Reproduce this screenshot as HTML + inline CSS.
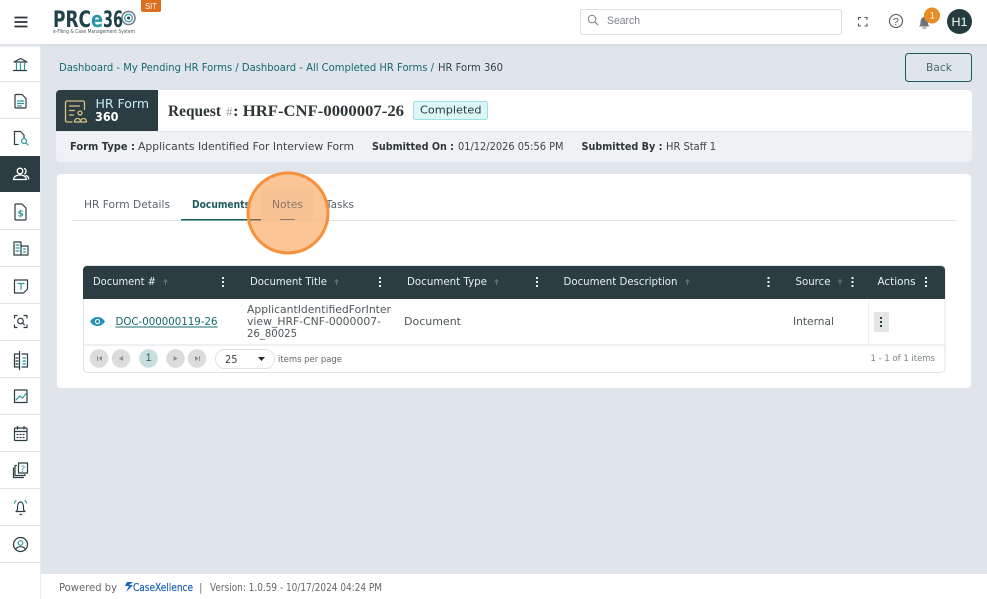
<!DOCTYPE html>
<html lang="en">
<head>
<meta charset="utf-8">
<title>HR Form 360</title>
<style>
html,body{margin:0;padding:0;width:987px;height:599px;overflow:hidden;background:#e0e5eb}
svg{position:absolute;left:0;top:0;display:block}
text{font-family:"DejaVu Sans",sans-serif;white-space:pre}
.ic{fill:none;stroke:#2b3d42;stroke-width:1.2;stroke-linecap:round;stroke-linejoin:round}
.ls{font-family:"Liberation Sans",sans-serif}
.sf{font-family:"Liberation Serif",serif}
</style>
</head>
<body>
<svg width="987" height="599" viewBox="0 0 987 599" xmlns="http://www.w3.org/2000/svg">
<defs>
<linearGradient id="hs" x1="0" y1="0" x2="0" y2="1"><stop offset="0" stop-color="#cfd4da"/><stop offset="1" stop-color="#e0e5eb"/></linearGradient>
</defs>
<rect width="987" height="599" fill="#e0e5eb"/>
<!-- footer -->
<rect x="41" y="574" width="946" height="25" fill="#fff"/>
<text x="59" y="591" font-size="10.500" fill="#666" textLength="58" lengthAdjust="spacingAndGlyphs">Powered by</text>
<path d="M133 582h-6l-2 4h4l-3 6 7-7h-4z" fill="#1565c0"/>
<text x="133" y="591" font-size="10.500" fill="#1b62b5" stroke="#1b62b5" stroke-width=".2" textLength="60" lengthAdjust="spacingAndGlyphs">CaseXellence</text>
<text x="199" y="591" font-size="10.500" fill="#777">|</text>
<text x="210" y="591" font-size="10.500" fill="#666" textLength="172" lengthAdjust="spacingAndGlyphs">Version: 1.0.59 - 10/17/2024 04:24 PM</text>

<!-- sidebar -->
<rect x="0" y="44" width="40" height="555" fill="#fff"/>
<rect x="40" y="44" width="1" height="555" fill="#e8ebef"/>
<g fill="#dcdfe3">
<rect y="81" width="40" height="1"/><rect y="118" width="40" height="1"/><rect y="229" width="40" height="1"/><rect y="266" width="40" height="1"/><rect y="303" width="40" height="1"/><rect y="340" width="40" height="1"/><rect y="377" width="40" height="1"/><rect y="414" width="40" height="1"/><rect y="451" width="40" height="1"/><rect y="488" width="40" height="1"/><rect y="525" width="40" height="1"/><rect y="562" width="40" height="1"/>
</g>
<rect y="156" width="40" height="36" fill="#2b3d42"/>

<!-- sidebar icons -->
<g class="ic">
<path d="M14 62l6.500-3.500L27 62zM13.500 70.500h13"/>
<path d="M16.500 63.500v6M20.500 63.500v6M24.500 63.500v6" stroke="#2c9a9a"/>
<path d="M16 94.500h6l4 4v8.500a1 1 0 0 1-1 1H16a1 1 0 0 1-1-1v-11.500a1 1 0 0 1 1-1z"/>
<path d="M17.500 101h6M17.500 103.500h6M17.500 106h4" stroke="#2c9a9a"/>
<path d="M18 144.500h-3.500v-13h6l3.500 3.500v3"/>
<circle cx="24" cy="141" r="2.500" stroke="#2c9a9a"/><path d="M26 143l2 2" stroke="#2c9a9a"/>
</g>
<g fill="none" stroke="#fff" stroke-width="1.300" stroke-linecap="round">
<circle cx="20" cy="171" r="2.800"/>
<path d="M13.500 179.500c.5-3 3-4.500 6.500-4.500s6 1.500 6.500 4.500z"/>
<path d="M24.500 168.500c2 .8 2 4.500 0 5.300M26 175.500c1.500.5 2.500 2 2.800 3.500"/>
</g>
<g class="ic">
<path d="M16 204h6l4 4v11a1 1 0 0 1-1 1H16a1 1 0 0 1-1-1v-14a1 1 0 0 1 1-1z"/>
<text x="17.500" y="216.500" font-size="9" font-weight="bold" fill="#2c9a9a" stroke="none">$</text>
<path d="M14 255v-13h7v13zM21 246h7v9h-7z"/>
<path d="M16 245h3M16 248h3M16 251h3M23.500 249h2M23.500 252h2" stroke="#2c9a9a"/>
<path d="M14.500 280h13v9l-4 4h-9z"/>
<path d="M18 283.500h6M21 283.500v6" stroke="#2c9a9a"/>
<path d="M14.500 318v-2.500h2.500M24 315.500h3v2.500M14.500 325v2.500h2.500M24 327.500h3V325"/>
<circle cx="20.500" cy="321" r="2.800"/><path d="M22.500 323l2 2"/>
<path d="M19.500 354h-5v13h5M19.500 351.500v18M22 354h5.500v13H22"/>
<path d="M16 358h2M16 361h2M16 364h2"/>
<path d="M23 358h2.500M23 361h2.500M23 364h2.500" stroke="#2c9a9a"/>
<rect x="14.500" y="390" width="12.500" height="12.500"/>
<path d="M16 400l3.500-4 3 2 4-5" stroke="#2c9a9a"/>
<rect x="14.500" y="428" width="12.500" height="12.500" rx="1"/>
<path d="M14.500 431.500h12.500M17.500 426.500v2.500M24 426.500v2.500"/>
<path d="M17 434.500h1M20 434.500h1M23 434.500h1M17 437.500h1M20 437.500h1M23 437.500h1"/>
<rect x="18.500" y="463" width="9" height="10"/>
<path d="M16.500 465.500h-1.500v10h10v-1"/><path d="M13.500 468v9.500h10"/>
<text x="20.500" y="472" font-size="9" fill="#2c9a9a" stroke="none">?</text>
<path d="M16 511.500c1.500-1 1.500-2 1.500-4 0-3 1-5.500 3-5.500s3 2.500 3 5.500c0 2 0 3 1.500 4z"/>
<path d="M20 514.500h1.500"/>
<path d="M14.500 503c.3-1 .8-1.800 1.500-2.500M26.500 503c-.3-1-.8-1.800-1.500-2.500" stroke="#2c9a9a"/>
<circle cx="20.500" cy="544.500" r="7"/>
<circle cx="20.500" cy="543" r="2.300" stroke="#2c9a9a"/>
<path d="M15.500 549.500c1-2 3-2.800 5-2.800s4 .8 5 2.800"/>
</g>

<!-- header -->
<rect y="44" width="987" height="3" fill="url(#hs)" opacity=".7"/>
<rect width="987" height="44" fill="#fff"/>
<path d="M14.500 17.500h13M14.500 22h13M14.500 26.500h13" stroke="#2a3338" stroke-width="1.800" fill="none"/>
<text x="53" y="27" font-size="22.500" font-weight="bold" fill="#21414a" textLength="38" lengthAdjust="spacingAndGlyphs">PRC</text>
<text x="91" y="27" font-size="22.500" font-weight="bold" fill="#2b96a8" textLength="12" lengthAdjust="spacingAndGlyphs">e</text>
<text x="103" y="27" font-size="22.500" font-weight="bold" fill="#21414a" textLength="20" lengthAdjust="spacingAndGlyphs">36</text>
<g fill="none">
<circle cx="128.500" cy="18" r="6.500" stroke="#6a7a80" stroke-width="1.500"/>
<circle cx="128.500" cy="18" r="3.800" stroke="#2b96a8" stroke-width="1.200"/>
<circle cx="128.500" cy="18" r="1.500" fill="#21414a"/>
</g>
<text x="53" y="33" font-size="5" fill="#4a5a60" textLength="82" lengthAdjust="spacingAndGlyphs">e-Filing &amp; Case Management System</text>
<path d="M141 0h20v10a2 2 0 0 1-2 2h-16a2 2 0 0 1-2-2z" fill="#dd701e"/>
<text class="ls" x="145" y="9" font-size="8" fill="#fff" textLength="12" lengthAdjust="spacingAndGlyphs">SIT</text>

<rect x="580.500" y="9.500" width="261" height="25" rx="2" fill="#fff" stroke="#dcdfe2"/>
<circle cx="592" cy="19" r="3.800" fill="none" stroke="#7b7f83" stroke-width="1"/>
<path d="M595 22l3 3" stroke="#7b7f83" stroke-width="1.200"/>
<text class="ls" x="607" y="24" font-size="11" fill="#7d8286" textLength="33" lengthAdjust="spacingAndGlyphs">Search</text>
<path d="M858.500 20v-2.500h2.500M864.500 17.500h2.500V20M858.500 23.500V26H861M864.500 26H867v-2.500" fill="none" stroke="#4c5458" stroke-width="1.100"/>
<circle cx="896" cy="21" r="6.500" fill="none" stroke="#4c5458" stroke-width="1.100"/>
<text class="ls" x="893" y="25" font-size="10.500" fill="#4c5458">?</text>
<path d="M919 26.500c1-1 1.500-2 1.500-4 0-3 1.500-5.500 3.500-5.500s4 2.500 4 5.500c0 2 .5 3 1.500 4z" fill="#6d7478"/>
<rect x="922.500" y="27.500" width="4" height="1" fill="#6d7478"/>
<circle cx="932" cy="15.500" r="8" fill="#e88c24"/>
<text class="ls" x="929.800" y="18.500" font-size="9" fill="#fff">1</text>
<circle cx="959.500" cy="21.500" r="12.500" fill="#243c40"/>
<text class="ls" x="951.500" y="26" font-size="12" fill="#fff" textLength="16" lengthAdjust="spacingAndGlyphs">H1</text>

<!-- breadcrumb -->
<text x="59" y="71" font-size="10.500" fill="#14696d" textLength="375" lengthAdjust="spacingAndGlyphs">Dashboard - My Pending HR Forms / Dashboard - All Completed HR Forms /</text>
<text x="438" y="71" font-size="10.500" fill="#30434a" textLength="65" lengthAdjust="spacingAndGlyphs">HR Form 360</text>
<rect x="905.500" y="53.500" width="66" height="28" rx="3" fill="none" stroke="#1d5a5e"/>
<text x="926" y="71" font-size="11" fill="#47696d" textLength="26" lengthAdjust="spacingAndGlyphs">Back</text>

<!-- request card -->
<path d="M60 90h908a4 4 0 0 1 4 4v37H56V94a4 4 0 0 1 4-4z" fill="#fff"/>
<path d="M56 131h916v27a4 4 0 0 1-4 4H60a4 4 0 0 1-4-4z" fill="#eff2f4"/>
<rect x="56" y="131" width="916" height="1" fill="#e4e8eb"/>
<path d="M60 90h98v41H56V94a4 4 0 0 1 4-4z" fill="#2b3d42"/>
<g fill="none" stroke="#dcc184" stroke-width="1.300" stroke-linecap="round" stroke-linejoin="round">
<path d="M72 122h-5a1.500 1.500 0 0 1-1.500-1.500v-18a1.500 1.500 0 0 1 1.500-1.500h16a1.500 1.500 0 0 1 1.500 1.500v7"/>
<path d="M69.500 106h10M69.500 110.500h5M69.500 115h4"/>
<circle cx="80" cy="113" r="2"/>
<path d="M74.500 122c0-2.500 1.500-3.500 3-3.500s3 1 3 3.500zM80.500 122c0-2.500 1.500-3.500 3-3.500s3 1 3 3.500z"/>
</g>
<text x="95.500" y="108" font-size="12" fill="#c9eef2" textLength="53.500" lengthAdjust="spacingAndGlyphs">HR Form</text>
<text x="95" y="121" font-size="12" font-weight="bold" fill="#fff" textLength="23.500" lengthAdjust="spacingAndGlyphs">360</text>
<text class="sf" x="168" y="116" font-size="16" font-weight="bold" fill="#2e3537" textLength="53" lengthAdjust="spacingAndGlyphs">Request</text>
<text class="sf" x="226" y="116" font-size="13" fill="#9aa1a4">#</text>
<text class="sf" x="233" y="116" font-size="16" font-weight="bold" fill="#2e3537" textLength="171" lengthAdjust="spacingAndGlyphs">: HRF-CNF-0000007-26</text>
<rect x="413.500" y="101.500" width="74" height="18" rx="2" fill="#dcf6f8" stroke="#9adfe1"/>
<text x="420" y="113.500" font-size="11" fill="#2a3a3e" textLength="61.500" lengthAdjust="spacingAndGlyphs">Completed</text>

<text x="70" y="150" font-size="10.500" font-weight="bold" fill="#2f3639" textLength="65" lengthAdjust="spacingAndGlyphs">Form Type :</text>
<text x="138" y="150" font-size="10.500" fill="#3d4548" textLength="216" lengthAdjust="spacingAndGlyphs">Applicants Identified For Interview Form</text>
<text x="372" y="150" font-size="10.500" font-weight="bold" fill="#2f3639" textLength="82" lengthAdjust="spacingAndGlyphs">Submitted On :</text>
<text x="458" y="150" font-size="10.500" fill="#3d4548" textLength="105.500" lengthAdjust="spacingAndGlyphs">01/12/2026 05:56 PM</text>
<text x="581.500" y="150" font-size="10.500" font-weight="bold" fill="#2f3639" textLength="81" lengthAdjust="spacingAndGlyphs">Submitted By :</text>
<text x="666" y="150" font-size="10.500" fill="#3d4548" textLength="50" lengthAdjust="spacingAndGlyphs">HR Staff 1</text>

<!-- main card -->
<rect x="57" y="174" width="914" height="214" rx="4" fill="#fff"/>
<text x="84" y="208" font-size="10.500" fill="#59666b" textLength="86" lengthAdjust="spacingAndGlyphs">HR Form Details</text>
<text x="192" y="208" font-size="10.500" font-weight="bold" fill="#1d5a5e" textLength="58" lengthAdjust="spacingAndGlyphs">Documents</text>
<text x="326" y="208" font-size="10.500" fill="#59666b" textLength="28" lengthAdjust="spacingAndGlyphs">Tasks</text>
<rect x="72" y="220" width="885" height="1" fill="#dfe3e5"/>
<rect x="181" y="219" width="80" height="1.500" fill="#145e5e"/>

<!-- grid -->
<rect x="83.500" y="265.500" width="861.500" height="107" rx="4" fill="#fff" stroke="#dfe2e4"/>
<path d="M87 266h854a4 4 0 0 1 4 4v29H83v-29a4 4 0 0 1 4-4z" fill="#2b3d42"/>
<text x="93" y="285" font-size="10.500" fill="#e9eff0" textLength="63" lengthAdjust="spacingAndGlyphs">Document #</text>
<text x="250" y="285" font-size="10.500" fill="#e9eff0" textLength="77" lengthAdjust="spacingAndGlyphs">Document Title</text>
<text x="407" y="285" font-size="10.500" fill="#e9eff0" textLength="80" lengthAdjust="spacingAndGlyphs">Document Type</text>
<text x="563.500" y="285" font-size="10.500" fill="#e9eff0" textLength="114" lengthAdjust="spacingAndGlyphs">Document Description</text>
<text x="795.500" y="285" font-size="10.500" fill="#e9eff0" textLength="35" lengthAdjust="spacingAndGlyphs">Source</text>
<text x="877.500" y="285" font-size="10.500" fill="#e9eff0" textLength="38" lengthAdjust="spacingAndGlyphs">Actions</text>
<g stroke="#63767b" stroke-width="1" fill="none">
<path d="M165.500 285v-5M163.500 282l2-2.500 2 2.500M336.500 285v-5M334.500 282l2-2.500 2 2.500M496.500 285v-5M494.500 282l2-2.500 2 2.500M687.500 285v-5M685.500 282l2-2.500 2 2.500M840 285v-5M838 282l2-2.500 2 2.500"/>
</g>
<g fill="#e9eff0">
<rect x="222" y="277" width="2" height="2"/><rect x="222" y="281" width="2" height="2"/><rect x="222" y="285" width="2" height="2"/>
<rect x="379" y="277" width="2" height="2"/><rect x="379" y="281" width="2" height="2"/><rect x="379" y="285" width="2" height="2"/>
<rect x="536" y="277" width="2" height="2"/><rect x="536" y="281" width="2" height="2"/><rect x="536" y="285" width="2" height="2"/>
<rect x="767.500" y="277" width="2" height="2"/><rect x="767.500" y="281" width="2" height="2"/><rect x="767.500" y="285" width="2" height="2"/>
<rect x="851.500" y="277" width="2" height="2"/><rect x="851.500" y="281" width="2" height="2"/><rect x="851.500" y="285" width="2" height="2"/>
<rect x="925" y="277" width="2" height="2"/><rect x="925" y="281" width="2" height="2"/><rect x="925" y="285" width="2" height="2"/>
</g>
<!-- row -->
<path d="M90 321.500c2-3 4.500-4.500 7.500-4.500s5.500 1.500 7.500 4.500c-2 3-4.500 4.500-7.500 4.500s-5.500-1.500-7.500-4.500z" fill="#1f93bd"/>
<circle cx="97.500" cy="321.500" r="2.600" fill="#fff"/><circle cx="97.500" cy="321.500" r="1.400" fill="#1f6e8c"/>
<text x="115.500" y="325" font-size="10.500" fill="#14696d" textLength="102" lengthAdjust="spacingAndGlyphs">DOC-000000119-26</text>
<rect x="115.500" y="326.500" width="102" height="1" fill="#14696d"/>
<text x="247" y="313" font-size="10.500" fill="#4d575b" textLength="144" lengthAdjust="spacingAndGlyphs">ApplicantIdentifiedForInter</text>
<text x="247" y="325" font-size="10.500" fill="#4d575b" textLength="134" lengthAdjust="spacingAndGlyphs">view_HRF-CNF-0000007-</text>
<text x="247" y="337" font-size="10.500" fill="#4d575b" textLength="50" lengthAdjust="spacingAndGlyphs">26_80025</text>
<text x="404" y="325" font-size="10.500" fill="#4d575b" textLength="57" lengthAdjust="spacingAndGlyphs">Document</text>
<text x="793" y="325" font-size="10.500" fill="#4d575b" textLength="41" lengthAdjust="spacingAndGlyphs">Internal</text>
<rect x="868" y="300" width="1" height="44" fill="#eceeef"/>
<rect x="874" y="312" width="15" height="20" rx="2" fill="#e3e5e6"/>
<g fill="#2b3d42"><rect x="880" y="317" width="2" height="2"/><rect x="880" y="321" width="2" height="2"/><rect x="880" y="325" width="2" height="2"/></g>
<rect x="84" y="344.500" width="861" height="1" fill="#dfe2e4"/>
<!-- pager -->
<g fill="#dcdcdc"><circle cx="99" cy="358.500" r="9.300"/><circle cx="121" cy="358.500" r="9.300"/><circle cx="175.500" cy="358.500" r="9.300"/><circle cx="197" cy="358.500" r="9.300"/></g>
<circle cx="148.500" cy="358.500" r="9.300" fill="#c8dedf"/>
<text class="ls" x="145.500" y="361" font-size="11" fill="#3a6468">1</text>
<g fill="#8f8f8f">
<path d="M97 356h1v5h-1zM102 356v5l-3.500-2.500zM123 356v5l-4-2.500zM173.500 356v5l4-2.500zM195 356v5l3.500-2.500zM199 356h1v5h-1z"/>
</g>
<rect x="215.500" y="349.500" width="59" height="19" rx="9" fill="#fff" stroke="#dfe2e4"/>
<text x="225" y="363" font-size="10.500" fill="#3a4144" textLength="12.500" lengthAdjust="spacingAndGlyphs">25</text>
<path d="M258 357h7l-3.500 4z" fill="#25292b"/>
<text x="278" y="362" font-size="9" fill="#5f676b" textLength="64" lengthAdjust="spacingAndGlyphs">items per page</text>
<text x="870.500" y="361" font-size="9" fill="#7a8286" textLength="64.500" lengthAdjust="spacingAndGlyphs">1 - 1 of 1 items</text>

<!-- click highlight -->
<circle cx="288" cy="213" r="40" fill="#fabb82" fill-opacity=".85" stroke="#f5913c" stroke-width="3"/>
<rect x="261" y="188" width="52" height="33" fill="#e8b68c" fill-opacity=".18"/>
<text x="272" y="208" font-size="10.500" fill="#8a7866" textLength="31" lengthAdjust="spacingAndGlyphs">Notes</text>
<rect x="280" y="219" width="15" height="1" fill="#8e7a66"/>
<rect x="250" y="219" width="11" height="1.500" fill="#6e6a55"/>
</svg>
</body>
</html>
